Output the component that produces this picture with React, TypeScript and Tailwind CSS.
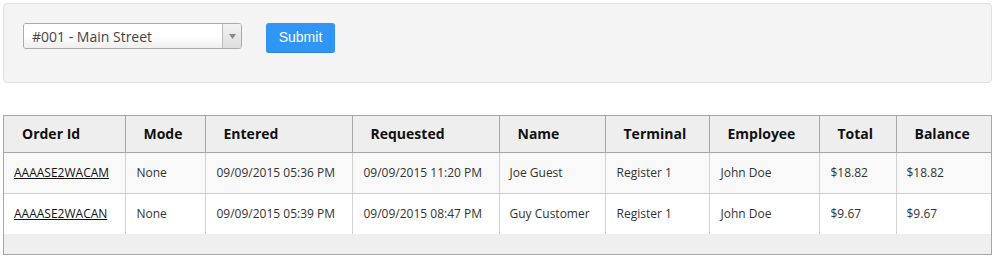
import { useState } from 'react';

type Order = {
  id: string;
  mode: string;
  entered: string;
  requested: string;
  name: string;
  terminal: string;
  employee: string;
  total: string;
  balance: string;
};

const orders: Order[] = [
  {
    id: 'AAAASE2WACAM',
    mode: 'None',
    entered: '09/09/2015 05:36 PM',
    requested: '09/09/2015 11:20 PM',
    name: 'Joe Guest',
    terminal: 'Register 1',
    employee: 'John Doe',
    total: '$18.82',
    balance: '$18.82',
  },
  {
    id: 'AAAASE2WACAN',
    mode: 'None',
    entered: '09/09/2015 05:39 PM',
    requested: '09/09/2015 08:47 PM',
    name: 'Guy Customer',
    terminal: 'Register 1',
    employee: 'John Doe',
    total: '$9.67',
    balance: '$9.67',
  },
];

const columns = [
  { label: 'Order Id', width: 'w-[121px]' },
  { label: 'Mode', width: 'w-[80px]' },
  { label: 'Entered', width: 'w-[147px]' },
  { label: 'Requested', width: 'w-[147px]' },
  { label: 'Name', width: 'w-[106px]' },
  { label: 'Terminal', width: 'w-[104px]' },
  { label: 'Employee', width: 'w-[110px]' },
  { label: 'Total', width: 'w-[77px]' },
  { label: 'Balance', width: 'w-[95px]' },
];

export default function App() {
  const [store, setStore] = useState('001');

  return (
    <div className="w-[996px] h-[258px] bg-white font-['Open_Sans',sans-serif] text-[#333]">
      {/* store picker */}
      <div className="ml-[3px] mt-[3px] w-[989px] h-[80px] rounded-[4px] border border-[#e0e0e0] bg-[#f4f4f4] flex items-start gap-[24px] pl-[19px] pt-[19px]">
        <div className="relative w-[219px] h-[26px] rounded-[3px] border border-[#aaaaaa] overflow-hidden">
          <select
            value={store}
            onChange={(e) => setStore(e.target.value)}
            className="appearance-none block w-full h-full bg-gradient-to-b from-white from-50% to-[#eeeeee] pl-[8px] pr-[24px] text-[14px] text-[#444] outline-none"
          >
            <option value="001">#001 - Main Street</option>
            <option value="002">#002 - Harbor Road</option>
          </select>
          <div className="pointer-events-none absolute right-0 top-0 h-full w-[19px] border-l border-[#bbbbbb] bg-gradient-to-b from-[#f2f2f2] to-[#dedede] flex items-center justify-center">
            <svg width="7" height="5" viewBox="0 0 7 5">
              <path d="M0 0h7L3.5 5z" fill="#888" />
            </svg>
          </div>
        </div>
        <button className="w-[69px] h-[30px] rounded-[3px] bg-[#2f96f5] border-b border-[#2a85d8] font-['Liberation_Sans',Arial,sans-serif] text-[14px] text-white">
          Submit
        </button>
      </div>

      {/* orders */}
      <div className="ml-[3px] mt-[32px] w-[989px] border border-[#a6a6a6] bg-[#efefef]">
        <table className="w-full table-fixed border-collapse">
          <colgroup>
            {columns.map((c) => (
              <col key={c.label} className={c.width} />
            ))}
          </colgroup>
          <thead>
            <tr className="h-[36px] bg-[#eeeeee] border-b border-[#a6a6a6]">
              {columns.map((c, i) => (
                <th
                  key={c.label}
                  className={`text-left pl-[18px] text-[14px] font-bold text-[#111] ${
                    i > 0 ? 'border-l border-[#a6a6a6]' : ''
                  }`}
                >
                  {c.label}
                </th>
              ))}
            </tr>
          </thead>
          <tbody className="text-[12px]">
            {orders.map((o, r) => (
              <tr
                key={o.id}
                className={`h-[41px] ${r === 0 ? 'bg-[#f9f9f9] border-b border-[#d0d0d0]' : 'bg-white'}`}
              >
                <td className="pl-[10px] pt-[1px]">
                  <a href="#" className="underline text-[#111]">
                    {o.id}
                  </a>
                </td>
                <td className="pl-[11px] pt-[1px] border-l border-[#d0d0d0]">{o.mode}</td>
                <td className="pl-[11px] pt-[1px] border-l border-[#d0d0d0]">{o.entered}</td>
                <td className="pl-[11px] pt-[1px] border-l border-[#d0d0d0]">{o.requested}</td>
                <td className="pl-[10px] pt-[1px] border-l border-[#d0d0d0]">{o.name}</td>
                <td className="pl-[11px] pt-[1px] border-l border-[#d0d0d0]">{o.terminal}</td>
                <td className="pl-[11px] pt-[1px] border-l border-[#d0d0d0]">{o.employee}</td>
                <td className="pl-[11px] pt-[1px] border-l border-[#d0d0d0]">{o.total}</td>
                <td className="pl-[10px] pt-[1px] border-l border-[#d0d0d0]">{o.balance}</td>
              </tr>
            ))}
          </tbody>
        </table>
        <div className="h-[20px]" />
      </div>
    </div>
  );
}
